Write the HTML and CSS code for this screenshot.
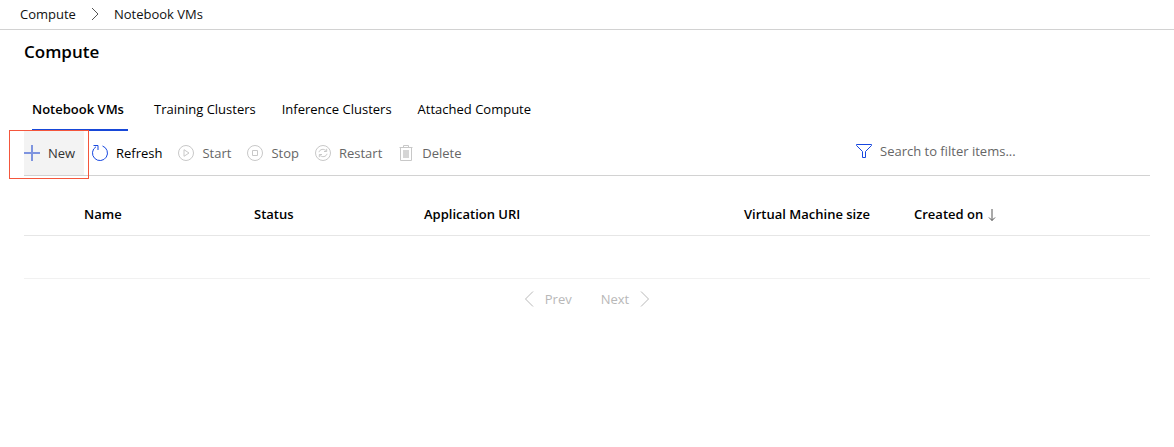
FILE: index.html
```
<!DOCTYPE html>
<html lang="en">
<head>
<meta charset="utf-8">
<title>Compute - Notebook VMs</title>
<meta name="viewport" content="width=device-width, initial-scale=1">
<link rel="stylesheet" href="styles.css">
</head>
<body>
<nav class="breadcrumb" aria-label="Breadcrumb">
  <a href="#">Compute</a>
  <svg class="crumb-sep" width="8" height="14" viewBox="0 0 8 14" aria-hidden="true"><path d="M1 1l6 6-6 6"/></svg>
  <a href="#">Notebook VMs</a>
</nav>
<main class="page">
  <h1 class="title">Compute</h1>
  <div class="tabs" role="tablist">
    <button class="tab tab-active" role="tab" aria-selected="true">Notebook VMs</button>
    <button class="tab" role="tab" aria-selected="false">Training Clusters</button>
    <button class="tab" role="tab" aria-selected="false">Inference Clusters</button>
    <button class="tab" role="tab" aria-selected="false">Attached Compute</button>
  </div>
  <div class="toolbar">
    <div class="commands">
      <div class="callout">
        <button class="command command-new">
          <svg class="icon icon-soft" width="16" height="16" viewBox="0 0 16 16" aria-hidden="true"><path d="M8 0v16M0 8h16"/></svg>New
        </button>
      </div>
      <button class="command">
        <svg class="icon" width="16" height="16" viewBox="0 0 16 16" aria-hidden="true"><path d="M10.500 1A7.500 7.500 0 1 1 4 1.700M1.500 .5H6V5"/></svg>Refresh
      </button>
      <button class="command" disabled>
        <svg class="icon" width="16" height="16" viewBox="0 0 16 16" aria-hidden="true"><circle cx="8" cy="8" r="7.500"/><path d="M6 4.700v6.600L11 8z"/></svg>Start
      </button>
      <button class="command" disabled>
        <svg class="icon" width="16" height="16" viewBox="0 0 16 16" aria-hidden="true"><circle cx="8" cy="8" r="7.500"/><path d="M5.500 5.500h5v5h-5z"/></svg>Stop
      </button>
      <button class="command" disabled>
        <svg class="icon" width="16" height="16" viewBox="0 0 16 16" aria-hidden="true"><circle cx="8" cy="8" r="7.500"/><path d="M4 7.200c.6-3 5-4 7.300-1.200M11.700 3.800v2.700H9M12 8.800c-.6 3-5 4-7.300 1.200M4.300 12.200V9.500H7"/></svg>Restart
      </button>
      <button class="command" disabled>
        <svg class="icon" width="16" height="16" viewBox="0 0 16 16" aria-hidden="true"><path d="M1.500 2.500h13M5.500 2.500v-2h5v2M2.500 2.500v13h11v-13"/><path class="bin-fill" d="M5 5h6v8H5z"/></svg>Delete
      </button>
    </div>
    <label class="search">
      <svg class="icon" width="16" height="16" viewBox="0 0 16 16" aria-hidden="true"><path d="M.5 1.500h15v1L9.500 8.500v6h-3v-6L.5 2.500z"/></svg>
      <input class="search-input" type="text" placeholder="Search to filter items..." aria-label="Search to filter items">
    </label>
  </div>
  <table class="grid">
    <colgroup><col class="col-check"><col class="col-std"><col class="col-std"><col class="col-uri"><col class="col-std"><col></colgroup>
    <thead>
      <tr><td></td><th scope="col">Name</th><th scope="col">Status</th><th scope="col">Application URI</th><th scope="col">Virtual Machine size</th><th scope="col" aria-sort="descending">Created on<svg class="sort" width="8" height="12" viewBox="0 0 8 12" aria-hidden="true"><path d="M4 0v11.500M1 8.500l3 3 3-3"/></svg></th></tr>
    </thead>
    <tbody><tr><td colspan="6"></td></tr></tbody>
  </table>
  <div class="pager">
    <button class="page-button" disabled><svg class="chevron" width="10" height="16" viewBox="0 0 10 16" aria-hidden="true"><path d="M9 .5L1.500 8 9 15.500"/></svg>Prev</button>
    <button class="page-button" disabled>Next<svg class="chevron" width="10" height="16" viewBox="0 0 10 16" aria-hidden="true"><path d="M1 .5L8.500 8 1 15.500"/></svg></button>
  </div>
</main>
</body>
</html>
```
FILE: styles.css
```
* { box-sizing: border-box; }
body {
  margin: 0;
  background: #fff;
  color: #000;
  font: 13px/20px "Segoe UI", "Open Sans", "Noto Sans", sans-serif;
}
button, input { font: inherit; color: inherit; border: 0; background: none; padding: 0; }
svg { fill: none; stroke: currentColor; flex: none; }
.breadcrumb {
  display: flex;
  align-items: center;
  gap: 15px;
  height: 30px;
  padding: 0 20px 2px;
  border-bottom: 1px solid #d2d2d2;
}
.breadcrumb a { color: #111; text-decoration: none; }
.crumb-sep { color: #555; }
.page { padding: 0 24px; }
.title { margin: 10px 0 0; font-size: 17px; line-height: 24px; font-weight: 600; }
.tabs { display: flex; gap: 26px; margin-top: 24px; padding-left: 8px; }
.tab { min-width: 96px; height: 43px; border-bottom: 2px solid transparent; text-align: left; white-space: nowrap; }
.tab-active { font-weight: 600; border-bottom-color: #1748d8; }
.toolbar {
  display: flex;
  justify-content: space-between;
  height: 45px;
  border-bottom: 1px solid #d2d2d2;
}
.commands { display: flex; gap: 8px; }
.command { display: flex; align-items: center; gap: 8px; height: 44px; padding-right: 8px; white-space: nowrap; }
.command-new { min-width: 60px; background: #f3f3f3; color: #333; }
.command:disabled { color: #666; }
.icon { color: #1748e0; }
.icon-soft { color: #7e94df; stroke-width: 2; }
.command:disabled .icon { color: #c8c8c8; }
.bin-fill { fill: #d6d6d6; stroke: none; }
.callout { position: relative; }
.callout::after {
  content: "";
  position: absolute;
  inset: -1px -5px -4px -15px;
  border: 1px solid #f4563c;
  pointer-events: none;
}
.search { display: flex; align-items: center; gap: 8px; width: 294px; height: 40px; }
.search-input { flex: 1; min-width: 0; outline: 0; }
.search-input::placeholder { color: #666; opacity: 1; }
.grid { width: 100%; border-collapse: collapse; table-layout: fixed; }
.grid th { padding: 0; text-align: left; font-weight: 600; white-space: nowrap; }
.grid thead tr { border-bottom: 1px solid #e6e6e6; }
.grid thead th { padding-top: 18px; height: 59px; vertical-align: middle; }
.grid tbody tr { height: 43px; border-bottom: 1px solid #f1f1f1; }
.grid td { padding: 0; }
.col-check { width: 60px; }
.col-std { width: 170px; }
.col-uri { width: 320px; }
.sort { margin-left: 5px; color: #555; vertical-align: -2px; }
.pager { display: flex; justify-content: center; gap: 29px; margin-top: 10px; }
.page-button { display: flex; align-items: center; gap: 11px; }
.page-button:disabled { color: #b8b8b8; }
```
